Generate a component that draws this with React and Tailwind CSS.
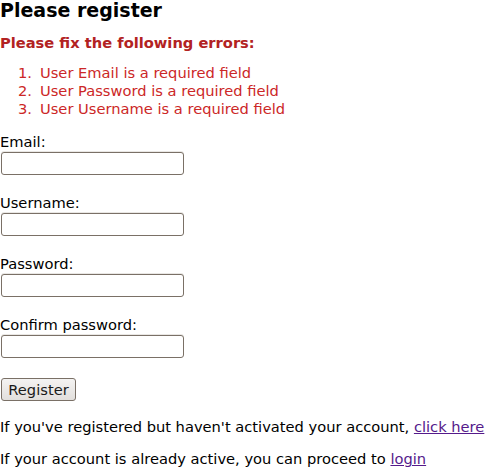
import React from 'react';

const fields = ['Email:', 'Username:', 'Password:', 'Confirm password:'];
const errors = [
  'User Email is a required field',
  'User Password is a required field',
  'User Username is a required field',
];

const Field = ({ label, first }) => (
  <div className={first ? 'mt-[16px]' : 'mt-[20px]'}>
    <label className="block leading-[16px]">{label}</label>
    <input
      type={label.toLowerCase().includes('password') ? 'password' : 'text'}
      className="mt-[2px] ml-[1px] block h-[23px] w-[183px] rounded-[3px] border border-[#7a7066] bg-white shadow-[0_-1px_0_#e9e7e4]"
    />
  </div>
);

const App = () => {
  return (
    <div className="min-h-screen whitespace-nowrap bg-white text-[11pt] text-black font-['DejaVu_Sans',sans-serif]">
      <h1 className="text-[19px] font-bold leading-[20px]">Please register</h1>
      <h3 className="mt-[14px] font-bold leading-[17px] text-[#b22222]">Please fix the following errors:</h3>
      <ol className="mt-[13px] pl-[18px] text-[#cc2727]">
        {errors.map((e, i) => (
          <li key={e} className="flex leading-[18px]">
            <span className="w-[22px] shrink-0">{i + 1}.</span>
            <span>{e}</span>
          </li>
        ))}
      </ol>
      {fields.map((f, i) => (
        <Field key={f} label={f} first={i === 0} />
      ))}
      <button
        type="button"
        className="mt-[20px] ml-[1px] h-[23px] w-[75px] rounded-[3px] border border-[#7a7066] bg-gradient-to-b from-[#f4f3f2] to-[#e2dfdc] text-[#1a1a1a]"
      >
        Register
      </button>
      <p className="mt-[17px] leading-[17px]">
        If you've registered but haven't activated your account,{' '}
        <a href="#" className="text-[#551a8b] underline">click here</a>
      </p>
      <p className="mt-[15px] leading-[17px]">
        If your account is already active, you can proceed to{' '}
        <a href="#" className="text-[#551a8b] underline">login</a>
      </p>
    </div>
  );
};

export default App;
